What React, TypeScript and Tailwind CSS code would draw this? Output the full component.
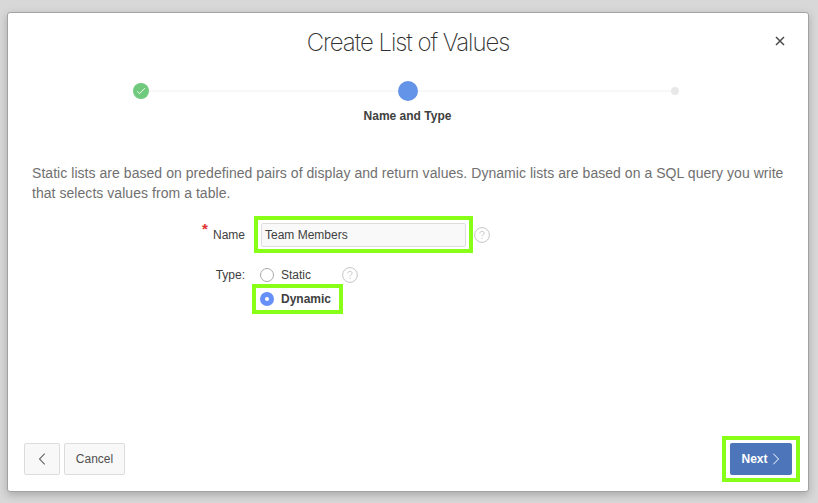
import React from "react";

function HelpIcon() {
  return (
    <svg width="16" height="16" viewBox="0 0 16 16" fill="none" stroke="#c6c6c6" className="block shrink-0">
      <circle cx="8" cy="8" r="7.4" />
      <path d="M5.9 6.3C5.9 5 6.8 4.3 8 4.3s2.1.7 2.1 1.9c0 1.6-2.1 1.6-2.1 3.3M8 10.9v1.1" />
    </svg>
  );
}

function Highlight({ className }: { className: string }) {
  return <span className={`pointer-events-none absolute border-4 border-[#88ff17] ${className}`} />;
}

function Steps() {
  return (
    <div className="flex flex-col px-[125px]">
      <div className="flex h-5 items-center">
        <span className="flex size-4 shrink-0 items-center justify-center rounded-full bg-[#6fca7d]">
          <svg width="10" height="10" viewBox="0 0 10 10" fill="none" stroke="#fff" strokeWidth="0.9">
            <path d="M1.2 5.4 3.5 7.7 8.9 2.2" />
          </svg>
        </span>
        <span className="h-0.5 w-[249px] bg-[#f8f8f8]" />
        <span className="size-5 shrink-0 rounded-full bg-[#6494e8]" />
        <span className="h-0.5 w-[253px] bg-[#f8f8f8]" />
        <span className="size-2 shrink-0 rounded-full bg-[#e8e8e8]" />
      </div>
      <div className="mt-[7px] w-[549px] text-center text-xs leading-4 font-bold text-[#404040]">Name and Type</div>
    </div>
  );
}

export default function App() {
  return (
    <div className="h-[503px] w-[818px] overflow-hidden bg-[#d8d8d8] pt-3 pl-[7px] font-['Liberation_Sans',Arial,sans-serif] text-xs text-[#404040]">
      <section className="flex h-[480px] w-[802px] flex-col rounded-[3px] border border-[#a3a3a3] bg-white shadow-[0_3px_8px_rgba(0,0,0,0.22)]">
        <header className="grid h-[68px] grid-cols-[1fr_auto_1fr] pt-3">
          <h1 className="col-start-2 mt-0.5 h-8 font-['Inter','Liberation_Sans',sans-serif] text-2xl leading-8 font-extralight tracking-[-1.05px] whitespace-nowrap text-[#303030]">
            Create List of Values
          </h1>
          <button aria-label="Close" className="mt-[11px] mr-[23.5px] size-[10px] justify-self-end">
            <svg width="10" height="10" viewBox="0 0 10 10" stroke="#4a4a4a" strokeWidth="1.5">
              <path d="M1 1l8 8M9 1 1 9" />
            </svg>
          </button>
        </header>
        <Steps />
        <p className="mt-[39px] ml-6 text-sm leading-5 tracking-[0.047px] whitespace-nowrap text-[#707070]">
          Static lists are based on predefined pairs of display and return values. Dynamic lists are based on a SQL query you write
          <br />
          that selects values from a table.
        </p>
        <div className="mt-5 flex h-6 items-center">
          <label className="relative w-[237px] text-right leading-4">
            <span className="absolute top-[-6px] left-[194px] text-[15px] leading-4 font-bold text-[#e03030]">*</span>
            Name
          </label>
          <div className="relative ml-4 flex h-6 w-[205px] items-center rounded-[2px] border border-[#dedede] bg-[#f9f9f9] pl-[3px]">
            Team Members
            <Highlight className="-top-2 -left-2 h-[37px] w-[219px]" />
          </div>
          <span className="ml-[7.5px]">
            <HelpIcon />
          </span>
        </div>
        <div className="mt-4 flex">
          <span className="w-[237px] pt-1 text-right leading-4">Type:</span>
          <div className="ml-[15px] flex w-[82px] flex-col">
            <label className="flex h-6 items-center gap-[7px]">
              <span className="size-[14px] rounded-full border border-[#a8a8a8] bg-white" />
              Static
            </label>
            <label className="relative flex h-6 items-center gap-[7px] font-bold">
              <span className="flex size-[14px] items-center justify-center rounded-full bg-[#6690f8]">
                <span className="size-1 rounded-full bg-white" />
              </span>
              Dynamic
              <Highlight className="-top-[3px] -left-2 h-[30px] w-[91px]" />
            </label>
          </div>
          <span className="pt-1">
            <HelpIcon />
          </span>
        </div>
        <footer className="mt-auto mb-4 flex h-8 items-stretch px-4">
          <button aria-label="Previous" className="flex w-9 items-center justify-center rounded-[2px] border border-[#dcdcdc] bg-[#f8f8f8]">
            <svg width="8" height="12" viewBox="0 0 8 12" fill="none" stroke="#686868" strokeWidth="1.1">
              <path d="M6.7.7 1.5 6l5.2 5.3" />
            </svg>
          </button>
          <button className="ml-1 w-[61px] rounded-[2px] border border-[#dcdcdc] bg-[#f8f8f8] text-center text-[#505050]">Cancel</button>
          <button className="relative ml-auto flex w-[62px] items-center rounded-[2px] bg-[#4d75ba] pl-[11.5px] font-bold text-white">
            Next
            <svg width="8" height="12" viewBox="0 0 8 12" fill="none" stroke="#fff" className="ml-1">
              <path d="M1.3.7 6.5 6l-5.2 5.3" />
            </svg>
            <Highlight className="-top-[7px] -left-2 h-[46px] w-[78px]" />
          </button>
        </footer>
      </section>
    </div>
  );
}
